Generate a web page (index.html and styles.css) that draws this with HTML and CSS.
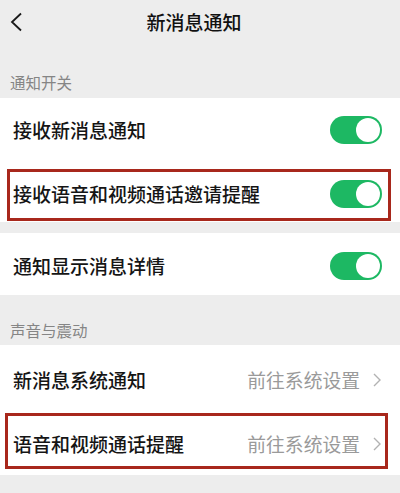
FILE: index.html
```html
<!DOCTYPE html>
<html lang="zh-CN">
<head>
<meta charset="utf-8">
<title>新消息通知</title>
<link rel="stylesheet" href="styles.css">
</head>
<body>
<div class="page">
  <header class="nav">
    <svg class="back" width="14" height="20" viewBox="0 0 14 20"><path d="M12 1.5 L3 10 L12 18.5" fill="none" stroke="#1a1a1a" stroke-width="1.8"/></svg>
    <div class="title">新消息通知</div>
  </header>

  <div class="label label-first">通知开关</div>
  <div class="group">
    <div class="row row-a">
      <span class="text">接收新消息通知</span>
      <span class="switch"><span class="knob"></span></span>
    </div>
    <div class="row row-b marked mark-1">
      <span class="text">接收语音和视频通话邀请提醒</span>
      <span class="switch"><span class="knob"></span></span>
    </div>
  </div>
  <div class="gap"></div>
  <div class="group">
    <div class="row row-c">
      <span class="text">通知显示消息详情</span>
      <span class="switch"><span class="knob"></span></span>
    </div>
  </div>

  <div class="label label-second">声音与震动</div>
  <div class="group">
    <div class="row row-d">
      <span class="text">新消息系统通知</span>
      <span class="value">前往系统设置<svg class="arrow" width="10" height="16" viewBox="0 0 10 16"><path d="M2 2 L8 8 L2 14" fill="none" stroke="#b2b2b2" stroke-width="1.4"/></svg></span>
    </div>
    <div class="row row-e marked mark-2">
      <span class="text">语音和视频通话提醒</span>
      <span class="value">前往系统设置<svg class="arrow" width="10" height="16" viewBox="0 0 10 16"><path d="M2 2 L8 8 L2 14" fill="none" stroke="#b2b2b2" stroke-width="1.4"/></svg></span>
    </div>
  </div>
</div>
</body>
</html>
```

FILE: styles.css
```css
html, body {
  margin: 0;
  padding: 0;
}
body {
  background: #ededed;
  font-family: "Noto Sans CJK SC", "Noto Sans", sans-serif;
  color: #1a1a1a;
  width: 400px;
  height: 493px;
  overflow: hidden;
}
.page {
  display: flex;
  flex-direction: column;
}
.nav {
  height: 44px;
  display: flex;
  align-items: center;
  justify-content: center;
  position: relative;
}
.back {
  position: absolute;
  left: 9px;
  top: 12px;
}
.title {
  font-size: 19px;
  line-height: 24px;
  margin-left: -12px;
  color: #111;
  font-weight: 500;
}
.label {
  display: flex;
  align-items: flex-end;
  padding-left: 10px;
  font-size: 15.5px;
  line-height: 20px;
  color: #858585;
  box-sizing: border-box;
}
.label-first {
  height: 54px;
  padding-bottom: 6px;
}
.label-second {
  height: 50px;
  padding-bottom: 5px;
}
.group {
  background: #fff;
  display: flex;
  flex-direction: column;
}
.gap {
  height: 11px;
}
.row {
  display: flex;
  align-items: center;
  justify-content: space-between;
  padding: 0 18px 0 13px;
  position: relative;
}
.row-a { height: 63px; }
.row-b { height: 61px; padding-top: 4px; box-sizing: border-box; }
.row-c { height: 62px; padding-top: 3px; box-sizing: border-box; }
.row-d { height: 67px; padding-top: 2px; box-sizing: border-box; }
.row-e { height: 63px; }
.text {
  font-size: 19px;
  line-height: 24px;
  font-weight: 500;
  color: #151515;
}
.value {
  display: flex;
  align-items: center;
  gap: 12px;
  font-size: 18.8px;
  line-height: 24px;
  color: #9a9a9a;
}
.switch {
  width: 52px;
  height: 28px;
  border-radius: 14px;
  background: #1db863;
  display: flex;
  align-items: center;
  justify-content: flex-end;
  padding: 0 2px;
  box-sizing: border-box;
}
.knob {
  width: 24px;
  height: 24px;
  border-radius: 50%;
  background: #fff;
}
.marked::after {
  content: "";
  position: absolute;
  border: 3px solid #a8281c;
  pointer-events: none;
}
.mark-1::after {
  top: 8px;
  left: 7px;
  right: 9px;
  bottom: 1px;
}
.mark-2::after {
  top: 1px;
  left: 5px;
  right: 12px;
  bottom: 6px;
}
```
